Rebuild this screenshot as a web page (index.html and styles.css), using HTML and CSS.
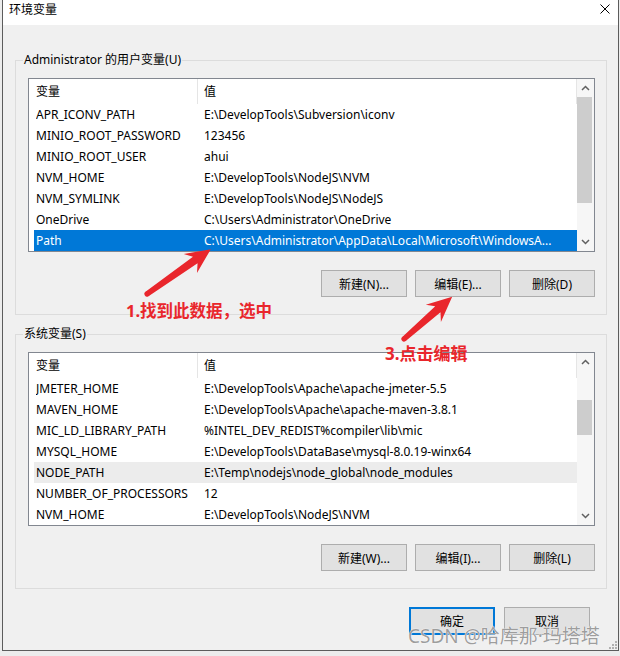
FILE: index.html
```html
<!DOCTYPE html>
<html lang="zh-CN">
<head>
<meta charset="utf-8">
<title>环境变量</title>
<link rel="stylesheet" href="styles.css">
</head>
<body>
<div class="window">
  <div class="titlebar">
    <span class="title">环境变量</span>
    <svg class="close" width="10" height="10" viewBox="0 0 10 10"><path d="M0.5 0.5 L9.5 9.5 M9.5 0.5 L0.5 9.5" stroke="#000" stroke-width="1" fill="none"/></svg>
  </div>
  <div class="body">
    <fieldset class="group">
      <legend>Administrator 的用户变量(U)</legend>
      <div class="listview">
        <div class="lv-main">
          <div class="lv-header"><div class="hcell c1">变量</div><div class="hcell c2">值</div></div>
          <div class="row"><span>APR_ICONV_PATH</span><span>E:\DevelopTools\Subversion\iconv</span></div>
          <div class="row"><span>MINIO_ROOT_PASSWORD</span><span>123456</span></div>
          <div class="row"><span>MINIO_ROOT_USER</span><span>ahui</span></div>
          <div class="row"><span>NVM_HOME</span><span>E:\DevelopTools\NodeJS\NVM</span></div>
          <div class="row"><span>NVM_SYMLINK</span><span>E:\DevelopTools\NodeJS\NodeJS</span></div>
          <div class="row"><span>OneDrive</span><span>C:\Users\Administrator\OneDrive</span></div>
          <div class="row sel"><span>Path</span><span>C:\Users\Administrator\AppData\Local\Microsoft\WindowsA...</span></div>
        </div>
        <div class="scrollbar">
          <div class="sb-btn"><svg width="9" height="6" viewBox="0 0 9 6"><path d="M1 5 L4.5 1.5 L8 5" stroke="#606060" stroke-width="1.5" fill="none"/></svg></div>
          <div class="sb-track"><div class="thumb t1"></div></div>
          <div class="sb-btn"><svg width="9" height="6" viewBox="0 0 9 6"><path d="M1 1 L4.5 4.5 L8 1" stroke="#606060" stroke-width="1.5" fill="none"/></svg></div>
        </div>
      </div>
      <div class="btnrow">
        <button class="btn">新建(N)...</button>
        <button class="btn">编辑(E)...</button>
        <button class="btn">删除(D)</button>
      </div>
    </fieldset>

    <fieldset class="group g2">
      <legend>系统变量(S)</legend>
      <div class="listview">
        <div class="lv-main">
          <div class="lv-header"><div class="hcell c1">变量</div><div class="hcell c2">值</div></div>
          <div class="row"><span>JMETER_HOME</span><span>E:\DevelopTools\Apache\apache-jmeter-5.5</span></div>
          <div class="row"><span>MAVEN_HOME</span><span>E:\DevelopTools\Apache\apache-maven-3.8.1</span></div>
          <div class="row"><span>MIC_LD_LIBRARY_PATH</span><span>%INTEL_DEV_REDIST%compiler\lib\mic</span></div>
          <div class="row"><span>MYSQL_HOME</span><span>E:\DevelopTools\DataBase\mysql-8.0.19-winx64</span></div>
          <div class="row hover"><span>NODE_PATH</span><span>E:\Temp\nodejs\node_global\node_modules</span></div>
          <div class="row"><span>NUMBER_OF_PROCESSORS</span><span>12</span></div>
          <div class="row"><span>NVM_HOME</span><span>E:\DevelopTools\NodeJS\NVM</span></div>
        </div>
        <div class="scrollbar">
          <div class="sb-btn"><svg width="9" height="6" viewBox="0 0 9 6"><path d="M1 5 L4.5 1.5 L8 5" stroke="#606060" stroke-width="1.5" fill="none"/></svg></div>
          <div class="sb-track"><div class="thumb t2"></div></div>
          <div class="sb-btn"><svg width="9" height="6" viewBox="0 0 9 6"><path d="M1 1 L4.5 4.5 L8 1" stroke="#606060" stroke-width="1.5" fill="none"/></svg></div>
        </div>
      </div>
      <div class="btnrow">
        <button class="btn">新建(W)...</button>
        <button class="btn">编辑(I)...</button>
        <button class="btn">删除(L)</button>
      </div>
    </fieldset>

    <div class="dlgbtns">
      <button class="btn lg default">确定</button>
      <button class="btn lg">取消</button>
    </div>
  </div>
  <svg class="grip" width="9" height="9" viewBox="0 0 9 9">
    <rect x="7" y="1" width="2" height="2" fill="#b0b0b0"/>
    <rect x="4" y="4" width="2" height="2" fill="#b0b0b0"/>
    <rect x="7" y="4" width="2" height="2" fill="#b0b0b0"/>
    <rect x="1" y="7" width="2" height="2" fill="#b0b0b0"/>
    <rect x="4" y="7" width="2" height="2" fill="#b0b0b0"/>
    <rect x="7" y="7" width="2" height="2" fill="#b0b0b0"/>
  </svg>
</div>

<div class="annot">
  <svg class="arrows" width="620" height="656" viewBox="0 0 620 656">
    <g transform="translate(147 294) rotate(-35.1)" fill="#e9262c">
      <circle cx="0" cy="0" r="2.6"/>
      <polygon points="0,-2.6 59,-4 53,-11.5 78,0 53,11.5 59,4 0,2.6"/>
    </g>
    <g transform="translate(404 339) rotate(-41.2)" fill="#e9262c">
      <circle cx="0" cy="0" r="2.6"/>
      <polygon points="0,-2.6 45,-4 39,-11.5 64,0 39,11.5 45,4 0,2.6"/>
    </g>
  </svg>
  <span class="note n1">1.找到此数据，选中</span>
  <span class="note n2">3.点击编辑</span>
</div>

<div class="watermark">CSDN @哈库那·玛塔塔</div>
</body>
</html>
```

FILE: styles.css
```css
* {
  box-sizing: border-box;
}

body {
  margin: 0;
  width: 620px;
  height: 656px;
  overflow: hidden;
  position: relative;
  background: #ececec;
  font-family: "Noto Sans", "Noto Sans CJK SC", sans-serif;
  font-size: 12px;
  color: #000;
}

.window {
  margin-left: 2px;
  width: 617px;
  border: 1px solid #5c5c5c;
  border-top: none;
  background: #f0f0f0;
  position: relative;
}

.titlebar {
  height: 25px;
  background: #fff;
  display: flex;
  justify-content: space-between;
  align-items: flex-start;
  padding: 2px 8px 0 6px;
}

.title {
  line-height: 16px;
}

.close {
  margin-top: 2px;
}

.body {
  padding: 27px 11px 15px 12px;
}

.group {
  margin: 0;
  padding: 10px 11px 17px 12px;
  border: 1px solid #dcdcdc;
  min-width: 0;
}

.group legend {
  padding: 0 1px;
  margin-left: -5px;
  line-height: 16px;
}

.g2 {
  margin-top: 11px;
}

.listview {
  display: flex;
  height: 174px;
  border: 1px solid #828790;
  background: #fff;
}

.lv-main {
  flex: 1;
  min-width: 0;
}

.lv-header {
  display: flex;
  height: 25px;
}

.hcell {
  line-height: 25px;
  border-right: 1px solid #e5e5e5;
}

.hcell.c1 {
  width: 169px;
  padding-left: 7px;
}

.hcell.c2 {
  flex: 1;
  padding-left: 6px;
}

.row {
  display: grid;
  grid-template-columns: 168px 1fr;
  margin-left: 5px;
  padding-left: 2px;
  height: 21px;
  line-height: 21px;
  white-space: nowrap;
}

.row span {
  overflow: hidden;
}

.row.sel {
  background: #0078d7;
  color: #fff;
}

.row.hover {
  background: #ececec;
}

.scrollbar {
  width: 17px;
  background: #f6f6f6;
  display: flex;
  flex-direction: column;
}

.sb-btn {
  height: 18px;
  display: flex;
  align-items: center;
  justify-content: center;
}

.sb-track {
  flex: 1;
}

.thumb {
  width: 15px;
  background: #cdcdcd;
}

.t1 {
  height: 106px;
}

.t2 {
  margin-top: 29px;
  height: 35px;
}

.btnrow {
  display: flex;
  justify-content: flex-end;
  gap: 8px;
  margin-top: 18px;
}

.btn {
  width: 86px;
  height: 27px;
  padding: 0;
  background: #e1e1e1;
  border: 1px solid #adadad;
  font: inherit;
  color: #000;
}

.btn.lg {
  height: 28px;
}

.btn.default {
  border: 2px solid #0078d7;
}

.dlgbtns {
  display: flex;
  justify-content: flex-end;
  gap: 9px;
  margin-top: 18px;
  padding-right: 17px;
}

.grip {
  position: absolute;
  right: 1px;
  bottom: 1px;
}

.annot {
  position: absolute;
  left: 0;
  top: 0;
  width: 620px;
  height: 656px;
  pointer-events: none;
}

.arrows {
  position: absolute;
  left: 0;
  top: 0;
}

.note {
  position: absolute;
  color: #e9262c;
  font-weight: bold;
  font-family: "Noto Sans", "Noto Sans CJK SC", sans-serif;
  line-height: 1;
  white-space: nowrap;
}

.n1 {
  left: 126px;
  top: 303px;
  font-size: 16.5px;
}

.n2 {
  left: 385px;
  top: 345px;
  font-size: 17px;
}

.watermark {
  position: absolute;
  left: 408px;
  top: 625px;
  font-family: "Noto Sans", "Noto Sans CJK SC", sans-serif;
  font-size: 19px;
  line-height: 22px;
  color: rgba(125, 125, 125, 0.75);
  text-shadow: 0 0 1px #fff, 0 0 1px #fff;
  white-space: nowrap;
}
```
